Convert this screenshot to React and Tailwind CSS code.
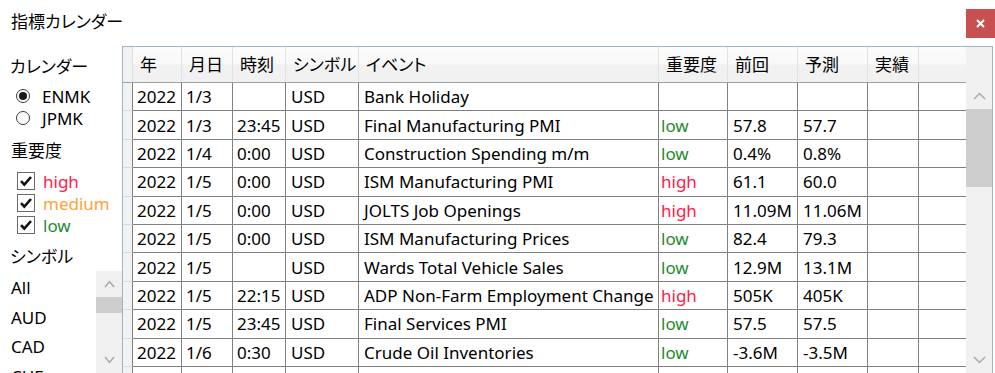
import React from "react";

const COLS = [
  { w: "w-[49px]", h: "年", pl: "pl-[4px]" },
  { w: "w-[51px]", h: "月日", pl: "pl-[4px]" },
  { w: "w-[53px]", h: "時刻", pl: "pl-[4px]" },
  { w: "w-[73px]", h: "シンボル", pl: "pl-[5px]" },
  { w: "w-[300px]", h: "イベント", pl: "pl-[5px]" },
  { w: "w-[69px]", h: "重要度", pl: "pl-[2px]" },
  { w: "w-[70px]", h: "前回", pl: "pl-[5px]" },
  { w: "w-[70px]", h: "予測", pl: "pl-[5px]" },
  { w: "w-[51px]", h: "実績", pl: "pl-[5px]" },
];

const ROWS = [
  ["2022", "1/3", "", "USD", "Bank Holiday", "", "", "", ""],
  ["2022", "1/3", "23:45", "USD", "Final Manufacturing PMI", "low", "57.8", "57.7", ""],
  ["2022", "1/4", "0:00", "USD", "Construction Spending m/m", "low", "0.4%", "0.8%", ""],
  ["2022", "1/5", "0:00", "USD", "ISM Manufacturing PMI", "high", "61.1", "60.0", ""],
  ["2022", "1/5", "0:00", "USD", "JOLTS Job Openings", "high", "11.09M", "11.06M", ""],
  ["2022", "1/5", "0:00", "USD", "ISM Manufacturing Prices", "low", "82.4", "79.3", ""],
  ["2022", "1/5", "", "USD", "Wards Total Vehicle Sales", "low", "12.9M", "13.1M", ""],
  ["2022", "1/5", "22:15", "USD", "ADP Non-Farm Employment Change", "high", "505K", "405K", ""],
  ["2022", "1/5", "23:45", "USD", "Final Services PMI", "low", "57.5", "57.5", ""],
  ["2022", "1/6", "0:30", "USD", "Crude Oil Inventories", "low", "-3.6M", "-3.5M", ""],
  ["", "", "", "", "", "", "", "", ""],
];

const impColor = (v) =>
  v === "high" ? "text-[#ff2048]" : v === "medium" ? "text-[#ffa235]" : v === "low" ? "text-[#1f8a2e]" : "";

function ChevronUp({ w = 12 }) {
  return (
    <svg width={w} height="8" viewBox={`0 0 ${w} 8`} fill="none">
      <polyline points={`1,7 ${w / 2},1.5 ${w - 1},7`} stroke="#a6a6a6" strokeWidth="1.4" />
    </svg>
  );
}
function ChevronDown({ w = 12 }) {
  return (
    <svg width={w} height="8" viewBox={`0 0 ${w} 8`} fill="none">
      <polyline points={`1,1 ${w / 2},6.5 ${w - 1},1`} stroke="#a6a6a6" strokeWidth="1.4" />
    </svg>
  );
}

function Radio({ checked, label }) {
  return (
    <div className="flex h-[22px] items-center pl-[16px]">
      <div className="w-[14px] h-[14px] rounded-full border border-[#3a3a3a] flex items-center justify-center">
        {checked && <div className="w-[8px] h-[8px] rounded-full bg-[#1a1a1a]" />}
      </div>
      <span className="ml-[12px]">{label}</span>
    </div>
  );
}

function Check({ label, color }) {
  return (
    <div className="flex h-[22px] items-center pl-[17px]">
      <div className="w-[18px] h-[18px] border border-[#6a6a6a] bg-white flex items-center justify-center">
        <svg width="14" height="14" viewBox="0 0 14 14" fill="none">
          <polyline points="2,7.2 5.3,10.5 12,3" stroke="#111" strokeWidth="2.6" />
        </svg>
      </div>
      <span className={`ml-[8px] ${color}`}>{label}</span>
    </div>
  );
}

function LeftPanel() {
  return (
    <div className="w-[122px] flex flex-col">
      <div className="mt-[8px] h-[24px] shrink-0 flex items-center pl-[10px]">カレンダー</div>
      <div className="mt-[7px] shrink-0">
        <Radio checked label="ENMK" />
        <Radio label="JPMK" />
      </div>
      <div className="mt-[9px] h-[24px] shrink-0 flex items-center pl-[11px]">重要度</div>
      <div className="mt-[8px] shrink-0">
        <Check label="high" color="text-[#ff2048]" />
        <Check label="medium" color="text-[#ffa235]" />
        <Check label="low" color="text-[#1f8a3e]" />
      </div>
      <div className="mt-[8px] h-[24px] shrink-0 flex items-center pl-[10px]">シンボル</div>
      <div className="mt-[3px] flex flex-1 min-h-0">
        <div className="flex-1 pt-[2px] overflow-hidden">
          {["All", "AUD", "CAD", "CHF"].map((s) => (
            <div key={s} className="h-[29.6px] flex items-center pl-[11px]">
              {s}
            </div>
          ))}
        </div>
        <div className="w-[26px] bg-[#f0f0f0] flex flex-col">
          <div className="h-[26px] shrink-0 flex items-center justify-center">
            <ChevronUp w={11} />
          </div>
          <div className="h-[16px] shrink-0 bg-[#cdcdcd]" />
          <div className="flex-1" />
          <div className="h-[26px] shrink-0 flex items-center justify-center">
            <ChevronDown w={11} />
          </div>
        </div>
      </div>
    </div>
  );
}

function Grid() {
  return (
    <div className="w-[871px] border border-b-0 border-[#9fb2cf] flex">
      <div className="flex-1 flex flex-col overflow-hidden">
        <div className="h-[36px] shrink-0 flex border-b border-[#a0a0a0] bg-[linear-gradient(#fcfcfc_0%,#f8f8f8_48%,#f1f1f1_52%,#f1f1f1_100%)]">
          <div className="w-[10px] shrink-0 border-r border-[#dedede] bg-[#f2f2f2]" />
          {COLS.map((c, i) => (
            <div key={i} className={`${c.w} shrink-0 border-r border-[#e2e2e2] flex items-center pl-[7px] whitespace-nowrap`}>
              {c.h}
            </div>
          ))}
          <div className="flex-1" />
        </div>
        {ROWS.map((r, ri) => (
          <div key={ri} className="h-[28.4px] flex shrink-0">
            <div className="w-[10px] shrink-0 bg-[#f1f2f4] border-r border-b border-r-[#808080] border-b-[#dcdcdc]" />
            {COLS.map((c, ci) => (
              <div
                key={ci}
                className={`${c.w} shrink-0 border-r border-b border-[#808080] flex items-center whitespace-nowrap overflow-hidden ${c.pl} ${ci === 5 ? impColor(r[ci]) : ""}`}
              >
                {r[ci]}
              </div>
            ))}
            <div className="flex-1 border-b border-[#808080]" />
          </div>
        ))}
      </div>
      <div className="w-[26px] shrink-0 bg-[#f0f0f0] flex flex-col">
        <div className="h-[36px] shrink-0" />
        <div className="h-[26px] shrink-0 flex items-center justify-center">
          <ChevronUp w={13} />
        </div>
        <div className="h-[78px] shrink-0 bg-[#cdcdcd]" />
        <div className="flex-1" />
        <div className="h-[27px] shrink-0 flex items-center justify-center">
          <ChevronDown w={13} />
        </div>
      </div>
    </div>
  );
}

export default function App() {
  return (
    <div className="w-[995px] h-[373px] overflow-hidden bg-white text-black text-[17px] leading-none font-['Noto_Sans','Noto_Sans_CJK_JP',sans-serif] [font-feature-settings:'palt']">
      <div className="h-[46px] flex items-start">
        <div className="h-[42px] flex items-center pl-[11px]">指標カレンダー</div>
        <div className="ml-auto mt-[9px] w-[29px] h-[29px] bg-[#c75050] flex items-center justify-center">
          <svg width="9" height="9" viewBox="0 0 9 9" fill="none">
            <path d="M1 1L8 8M8 1L1 8" stroke="#fff" strokeWidth="2" />
          </svg>
        </div>
      </div>
      <div className="flex h-[327px]">
        <LeftPanel />
        <Grid />
      </div>
    </div>
  );
}
